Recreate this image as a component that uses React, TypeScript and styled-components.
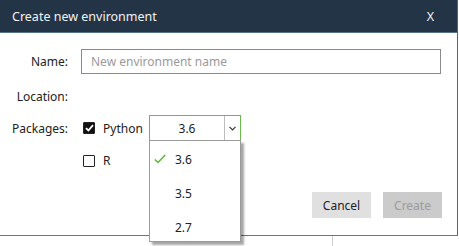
import React from "react";
import styled, { createGlobalStyle } from "styled-components";

const Global = createGlobalStyle`
  html, body { margin: 0; padding: 0; background: #fff; }
  body { font-family: "Noto Sans", "Open Sans", sans-serif; width: 459px; height: 246px; overflow: hidden; }
  * { box-sizing: border-box; }
`;

const Page = styled.div`
  width: 459px;
  height: 246px;
  position: relative;
  background: #fff;
`;

const Dialog = styled.div`
  width: 458px;
  height: 236px;
  border-right: 1px solid #4a6b7e;
  border-bottom: 1px solid #5b7a86;
  display: flex;
  flex-direction: column;
  background: #fff;
`;

const Header = styled.div`
  height: 33px;
  background: #243447;
  border-bottom: 1px solid #4f7389;
  display: flex;
  align-items: center;
  justify-content: space-between;
  padding: 0 23px 0 12px;
  color: #f2f2f2;
  font-size: 12.5px;
`;

const Body = styled.div`
  flex: 1;
  position: relative;
  padding: 16px 16px 0 0;
  font-size: 12px;
  color: #222;
`;

const Row = styled.div<{ $mt: number; $h?: number }>`
  display: flex;
  align-items: center;
  margin-top: ${(p) => p.$mt}px;
  height: ${(p) => p.$h ?? 25}px;
`;

const Label = styled.div`
  width: 68px;
  text-align: right;
  margin-right: 13px;
  flex-shrink: 0;
`;

const Input = styled.div`
  flex: 1;
  height: 25px;
  border: 1px solid #8a8a8a;
  display: flex;
  align-items: center;
  padding-left: 9px;
  color: #9a9a9a;
`;

const Box = styled.div<{ $checked?: boolean }>`
  width: 12px;
  height: 12px;
  margin-left: 2px;
  border: 1.5px solid #222;
  border-radius: 1px;
  background: ${(p) => (p.$checked ? "#111" : "#fff")};
  display: flex;
  align-items: center;
  justify-content: center;
`;

const CheckText = styled.span`
  margin-left: 8px;
  width: 46px;
`;

const SelectWrap = styled.div`
  position: relative;
`;

const Select = styled.div`
  width: 92px;
  height: 26px;
  border: 1px solid #6ab94a;
  display: flex;
`;

const SelectValue = styled.div`
  flex: 1;
  display: flex;
  align-items: center;
  justify-content: center;
  border-right: 1px solid #bdbdbd;
`;

const SelectArrow = styled.div`
  width: 15px;
  display: flex;
  align-items: center;
  justify-content: center;
`;

const Menu = styled.div`
  position: absolute;
  top: 25px;
  left: 0;
  width: 92px;
  height: 102px;
  background: #fff;
  border: 1px solid #9a9a9a;
  box-shadow: 3px 3px 2px rgba(0, 0, 0, 0.35);
  padding-top: 1px;
  z-index: 5;
`;

const Item = styled.div`
  height: 34px;
  display: flex;
  align-items: center;
  position: relative;
  padding-left: 25px;
`;

const Check = styled.svg`
  position: absolute;
  left: 4px;
  top: 12px;
`;

const Buttons = styled.div`
  position: absolute;
  right: 15px;
  top: 159px;
  display: flex;
  gap: 12px;
`;

const Button = styled.div<{ $disabled?: boolean }>`
  width: 59px;
  height: 26px;
  display: flex;
  align-items: center;
  justify-content: center;
  background: ${(p) => (p.$disabled ? "#cbcbcb" : "#e0e0e0")};
  color: ${(p) => (p.$disabled ? "#9b9b9b" : "#222")};
`;

const Below = styled.div`
  height: 10px;
  display: flex;
`;

const VLine = styled.div`
  margin-left: 332px;
  width: 1px;
  background: #cfcfcf;
`;

export default function App() {
  return (
    <Page>
      <Global />
      <Dialog>
        <Header>
          <span>Create new environment</span>
          <span>X</span>
        </Header>
        <Body>
          <Row $mt={0}>
            <Label>Name:</Label>
            <Input>New environment name</Input>
          </Row>
          <Row $mt={10}>
            <Label>Location:</Label>
          </Row>
          <Row $mt={6} $h={26}>
            <Label>Packages:</Label>
            <Box $checked>
              <svg width="9" height="8" viewBox="0 0 9 8">
                <path d="M1 4.2 L3.4 6.5 L8 1.2" stroke="#fff" strokeWidth="1.8" fill="none" />
              </svg>
            </Box>
            <CheckText>Python</CheckText>
            <SelectWrap>
              <Select>
                <SelectValue>3.6</SelectValue>
                <SelectArrow>
                  <svg width="7" height="5" viewBox="0 0 7 5">
                    <path d="M0.5 0.8 L3.5 3.8 L6.5 0.8" stroke="#333" strokeWidth="1.2" fill="none" />
                  </svg>
                </SelectArrow>
              </Select>
              <Menu>
                <Item>
                  <Check width="12" height="10" viewBox="0 0 12 10">
                    <path d="M0.8 5.5 L4 8.5 L11.2 1" stroke="#5cb83c" strokeWidth="1.6" fill="none" />
                  </Check>
                  3.6
                </Item>
                <Item>3.5</Item>
                <Item>2.7</Item>
              </Menu>
            </SelectWrap>
          </Row>
          <Row $mt={7}>
            <Label />
            <Box />
            <CheckText>R</CheckText>
          </Row>
          <Buttons>
            <Button>Cancel</Button>
            <Button $disabled>Create</Button>
          </Buttons>
        </Body>
      </Dialog>
      <Below>
        <VLine />
      </Below>
    </Page>
  );
}
